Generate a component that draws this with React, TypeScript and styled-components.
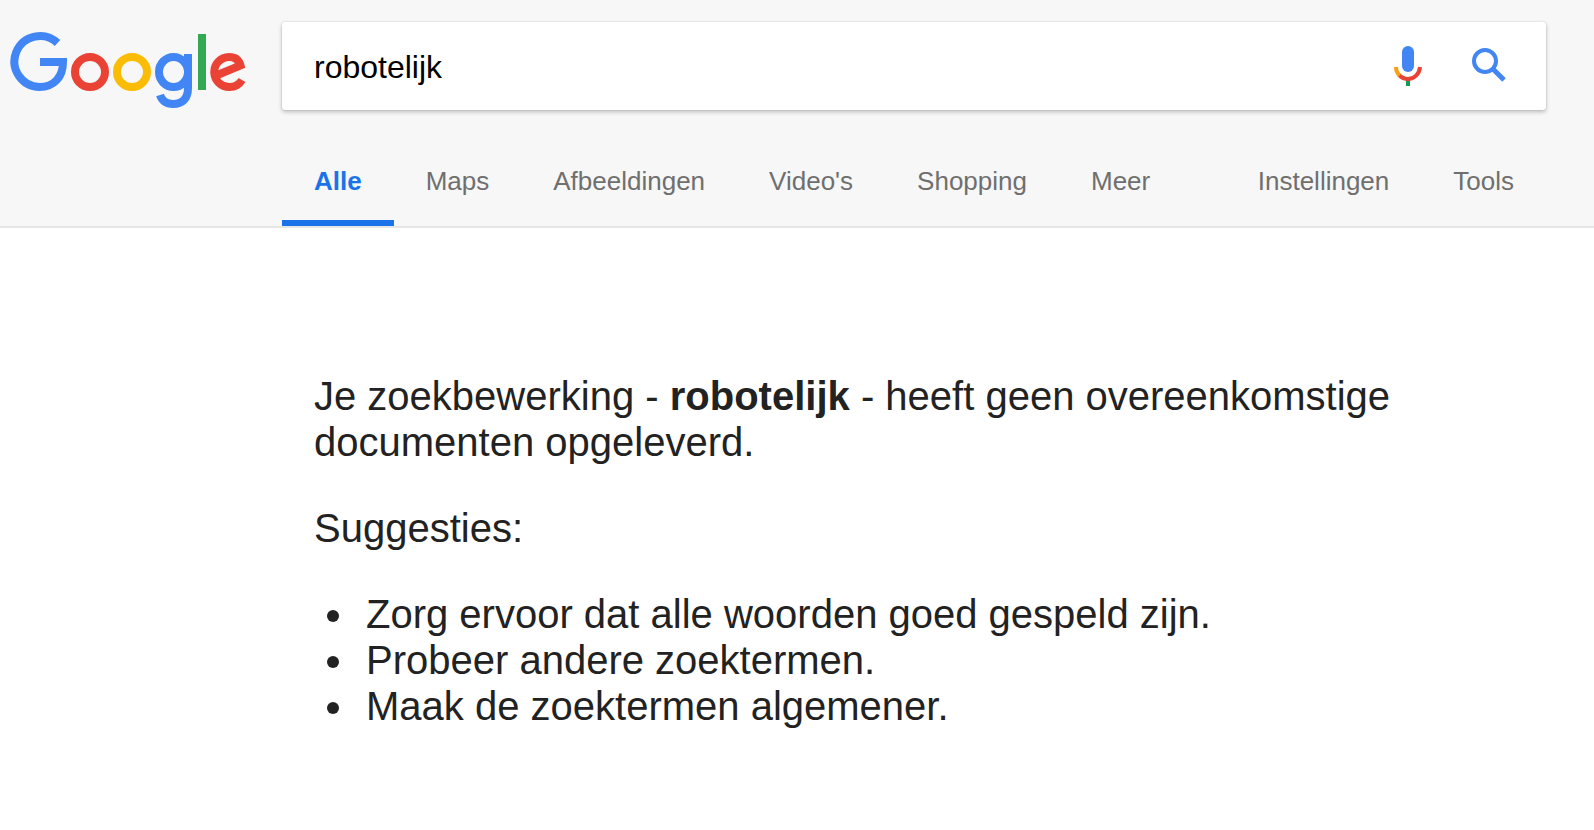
import React from "react";
import styled, { createGlobalStyle } from "styled-components";

const GlobalStyle = createGlobalStyle`
  *, *::before, *::after { box-sizing: border-box; }
  body {
    margin: 0;
    background: #fff;
    color: #222;
    font-family: "Liberation Sans", Arial, sans-serif;
  }
`;

const Header = styled.header`
  display: grid;
  grid-template-columns: 282px minmax(0, 1fr);
  padding: 22px 48px 0 0;
  background: #f7f7f7;
  border-bottom: 2px solid #e6e6e6;
`;

const LogoLink = styled.a`
  display: block;
  padding: 8px 0 0 8px;
  svg { display: block; }
`;

const SearchForm = styled.form`
  display: flex;
  align-items: center;
  height: 88px;
  padding: 0 38px 0 32px;
  background: #fff;
  border-radius: 3px;
  box-shadow: 0 2px 4px rgba(0, 0, 0, 0.24), 0 0 2px rgba(0, 0, 0, 0.14);
`;

const SearchInput = styled.input`
  flex: 1;
  min-width: 0;
  height: 48px;
  padding: 2px 0 0;
  border: 0;
  outline: 0;
  background: transparent;
  color: #000;
  font-family: inherit;
  font-size: 32px;
`;

const IconButton = styled.button`
  display: flex;
  padding: 0;
  border: 0;
  background: transparent;
  cursor: pointer;
  & + & { margin-left: 40px; }
`;

const Nav = styled.nav`
  grid-column: 2;
  display: flex;
  justify-content: space-between;
  padding-top: 24px;
`;

const TabGroup = styled.div`
  display: flex;
`;

const Tab = styled.a<{ $active?: boolean }>`
  height: 92px;
  padding: 32px 32px 0;
  border-bottom: 6px solid ${(p) => (p.$active ? "#1a73e8" : "transparent")};
  color: ${(p) => (p.$active ? "#1a73e8" : "#6f6f6f")};
  font-size: 26px;
  font-weight: ${(p) => (p.$active ? 700 : 400)};
  line-height: 30px;
  text-decoration: none;
  white-space: nowrap;
`;

const Results = styled.main`
  padding: 145px 180px 80px 314px;
  font-size: 40px;
  line-height: 46px;
`;

const Message = styled.p`
  margin: 0 0 40px;
`;

const Suggestions = styled.ul`
  margin: 0;
  padding-left: 44px;
`;

const Suggestion = styled.li`
  padding-left: 8px;
`;

const Logo = () => (
  <svg width="240" height="80" viewBox="8 30 240 80" fill="none" strokeWidth="8" role="img" aria-label="Google">
    <path stroke="#4285f4" d="M57.5 43A25.5 25.5 0 1 0 39.5 87C54 87 63 77 63 62H40" />
    <circle stroke="#ea4335" cx="90" cy="72" r="15" />
    <circle stroke="#fbbc05" cx="132" cy="72" r="15" />
    <path stroke="#4285f4" d="M188 54V88C188 99 182 104 173 104C166 104 162 101 160 95" />
    <ellipse stroke="#4285f4" cx="173.5" cy="72" rx="14.5" ry="15" />
    <path stroke="#34a853" d="M202 34V90" />
    <path stroke="#ea4335" d="M242 80C239 85 235 87 229.5 87A15 15 0 0 1 229 57C235 57 239 60 240.5 65.5L215 76" />
  </svg>
);

const MicIcon = () => (
  <svg width="40" height="48" viewBox="0 0 40 48" fill="none" aria-hidden="true">
    <rect x="14" y="4" width="12" height="26" rx="6" fill="#4285f4" />
    <path d="M20 36V44" stroke="#0f9d58" strokeWidth="4" />
    <path d="M11 33C14 36 17 37 20 37C26 37 31.5 32 32 25" stroke="#ea4335" strokeWidth="4" />
    <path d="M8 25C8 28 9 31 11.5 33.5" stroke="#f9a01b" strokeWidth="4" />
  </svg>
);

const SearchIcon = () => (
  <svg width="40" height="48" viewBox="0 0 40 48" fill="none" stroke="#4285f4" strokeWidth="4" aria-hidden="true">
    <circle cx="17" cy="19" r="11" />
    <path d="M25 27L36 38" strokeWidth="5" />
  </svg>
);

const TABS = ["Alle", "Maps", "Afbeeldingen", "Video's", "Shopping", "Meer"];
const TOOLS = ["Instellingen", "Tools"];
const HINTS = [
  "Zorg ervoor dat alle woorden goed gespeld zijn.",
  "Probeer andere zoektermen.",
  "Maak de zoektermen algemener.",
];

export default function App() {
  return (
    <>
      <GlobalStyle />
      <Header>
        <LogoLink href="#">
          <Logo />
        </LogoLink>
        <SearchForm role="search" onSubmit={(e) => e.preventDefault()}>
          <SearchInput type="text" aria-label="Zoeken" defaultValue="robotelijk" spellCheck={false} />
          <IconButton type="button" aria-label="Gesproken zoekopdracht">
            <MicIcon />
          </IconButton>
          <IconButton type="submit" aria-label="Google Zoeken">
            <SearchIcon />
          </IconButton>
        </SearchForm>
        <Nav>
          <TabGroup>
            {TABS.map((label, i) => (
              <Tab key={label} href="#" $active={i === 0}>
                {label}
              </Tab>
            ))}
          </TabGroup>
          <TabGroup>
            {TOOLS.map((label) => (
              <Tab key={label} href="#">
                {label}
              </Tab>
            ))}
          </TabGroup>
        </Nav>
      </Header>
      <Results>
        <Message>
          Je zoekbewerking - <strong>robotelijk</strong> - heeft geen overeenkomstige documenten opgeleverd.
        </Message>
        <Message>Suggesties:</Message>
        <Suggestions>
          {HINTS.map((hint) => (
            <Suggestion key={hint}>{hint}</Suggestion>
          ))}
        </Suggestions>
      </Results>
    </>
  );
}
